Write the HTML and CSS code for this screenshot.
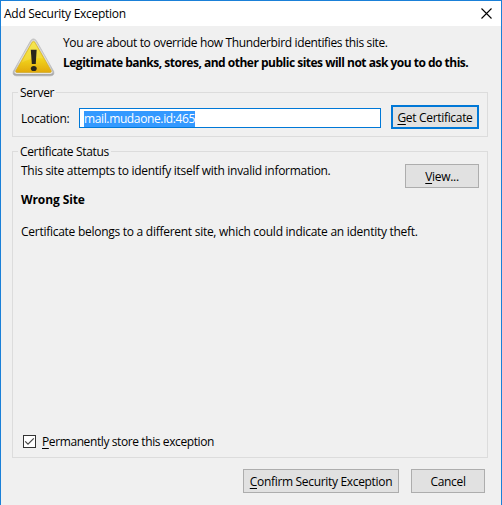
FILE: index.html
```html
<!DOCTYPE html>
<html lang="en">
<head>
    <meta charset="UTF-8">
    <title>Add Security Exception</title>
    <link rel="stylesheet" href="styles.css">
</head>
<body>
    <div class="dialog">
        <div class="titlebar">
            <span class="title">Add Security Exception</span>
            <svg class="close" width="11" height="11" viewBox="0 0 11 11">
                <path d="M0.5 0.5L10.5 10.5M10.5 0.5L0.5 10.5" stroke="#000" stroke-width="1.1"/>
            </svg>
        </div>

        <div class="warning">
            <svg class="warning-icon" width="43" height="39" viewBox="0 0 44 40">
                <defs>
                    <linearGradient id="edge" x1="0" y1="0" x2="0" y2="1">
                        <stop offset="0" stop-color="#c9c9c9"/>
                        <stop offset="0.6" stop-color="#dedede"/>
                        <stop offset="1" stop-color="#a4a4a4"/>
                    </linearGradient>
                    <linearGradient id="fill" x1="0" y1="0" x2="0" y2="1">
                        <stop offset="0" stop-color="#f3e33c"/>
                        <stop offset="0.55" stop-color="#f2d51c"/>
                        <stop offset="1" stop-color="#e2a90c"/>
                    </linearGradient>
                </defs>
                <path d="M19.2 2.6Q22 -0.6 24.8 2.6L42.6 34Q44 38.6 39.6 38.8H4.4Q0 38.6 1.4 34Z" fill="url(#edge)" stroke="#b4b4b4" stroke-width="0.7"/>
                <path d="M20 3.6Q22 1.2 24 3.6L41.4 34.4Q42 36.6 39.4 36.8H4.6Q2 36.6 2.6 34.4Z" fill="#e6e6e6"/>
                <path d="M20.6 4.2Q22 2.4 23.4 4.2L40.2 33.6Q40.6 35.3 39.2 35.4H4.8Q3.4 35.3 3.8 33.6Z" fill="url(#fill)" stroke="#cfa829" stroke-width="0.7"/>
                <path d="M20.8 5.4Q22 3.8 23.2 5.4L32 21Q20 20 9.6 25.4Z" fill="#fff" opacity="0.13"/>
                <path d="M19.2 12H25.2L24.3 26.6H20.3Z" fill="#29271c"/>
                <ellipse cx="22.3" cy="31.3" rx="3" ry="2.6" fill="#29271c"/>
            </svg>
            <div class="warning-text">
                <p class="override">You are about to override how Thunderbird identifies this site.</p>
                <p class="legit">Legitimate banks, stores, and other public sites will not ask you to do this.</p>
            </div>
        </div>

        <fieldset class="server">
            <legend>Server</legend>
            <label class="location-label" for="location">Location:</label>
            <div class="location" id="location"><span class="selected">mail.mudaone.id:465</span></div>
            <button class="btn get-cert"><u>G</u>et Certificate</button>
        </fieldset>

        <fieldset class="status">
            <legend class="status-legend">Certificate Status</legend>
            <div class="status-row">
                <p class="attempt">This site attempts to identify itself with invalid information.</p>
                <button class="btn view"><u>V</u>iew...</button>
            </div>
            <p class="wrong">Wrong Site</p>
            <p class="belongs">Certificate belongs to a different site, which could indicate an identity theft.</p>
            <div class="store">
                <svg class="checkbox" width="13" height="13" viewBox="0 0 13 13">
                    <rect x="0.5" y="0.5" width="12" height="12" fill="#fff" stroke="#333"/>
                    <path d="M2.2 6.4L5 9.2L10.8 3.4" fill="none" stroke="#444" stroke-width="1.2"/>
                </svg>
                <span class="store-label"><u>P</u>ermanently store this exception</span>
            </div>
        </fieldset>

        <div class="actions">
            <button class="btn confirm"><u>C</u>onfirm Security Exception</button>
            <button class="btn cancel">Cancel</button>
        </div>
    </div>
</body>
</html>
```
FILE: styles.css
```css
* {
    box-sizing: border-box;
}
body {
    margin: 0;
    font-family: "Open Sans", "Noto Sans", sans-serif;
    font-size: 12px;
    line-height: 17px;
    letter-spacing: -0.27px;
    color: #000;
    white-space: nowrap;
    overflow: hidden;
}
p {
    margin: 0;
}
u {
    text-underline-offset: 2px;
    text-decoration-thickness: 1px;
    text-decoration-skip-ink: none;
}
.dialog {
    height: 505px;
    background-color: #f0f0f0;
    border: 1px solid #1a80d8;
    border-bottom: none;
}
.titlebar {
    display: flex;
    align-items: center;
    justify-content: space-between;
    height: 25px;
    padding: 0 9px 0 3px;
    background-color: #fff;
}
.warning {
    display: flex;
    height: 58px;
    padding: 8px 0 0 10px;
}
.warning-icon {
    margin: 4px 0 0 1px;
}
.warning-text {
    margin-left: 8px;
}
.override {
    letter-spacing: -0.365px;
}
.legit {
    margin-top: 3px;
    font-weight: bold;
    letter-spacing: -0.5px;
}
fieldset {
    min-width: 0;
    margin: 0 13px 0 11px;
    padding: 0 8px 0 5px;
    border: 1px solid #dcdcdc;
}
legend {
    height: 17px;
    padding: 0 2px;
}
.status-legend {
    letter-spacing: -0.34px;
}
.server {
    height: 53px;
}
.server, .store {
    display: flex;
}
.location-label {
    width: 58px;
    margin: 9px 0 0 3px;
}
.location {
    width: 302px;
    height: 20px;
    margin-top: 7px;
    padding: 1px 4px;
    border: 1px solid #0078d7;
    background-color: #fff;
}
.selected {
    display: inline-block;
    height: 16px;
    line-height: 16px;
    letter-spacing: -0.37px;
    background-color: #3399ff;
    color: #fff;
}
.btn {
    height: 24px;
    padding: 0;
    border: 1px solid #adadad;
    background-color: #e1e1e1;
    color: #000;
    font: inherit;
    letter-spacing: -0.32px;
}
.get-cert {
    width: 88px;
    margin: 4px 0 0 10px;
    border: 2px solid #0078d7;
}
.status {
    height: 315px;
    margin-top: 6px;
}
.status-row {
    display: flex;
    justify-content: space-between;
    padding: 2px 0 0 3px;
}
.attempt {
    letter-spacing: -0.29px;
}
.view {
    width: 74px;
    margin-top: 2px;
}
.wrong {
    margin: 3px 0 0 3px;
    font-weight: bold;
    letter-spacing: -0.1px;
}
.belongs {
    margin: 15px 0 0 3px;
}
.store {
    align-items: center;
    margin: 193px 0 0 5px;
}
.store-label {
    margin-left: 6px;
    letter-spacing: -0.4px;
}
.actions {
    display: flex;
    justify-content: flex-end;
    gap: 12px;
    margin: 11px 16px 0 0;
}
.confirm {
    width: 156px;
}
.cancel {
    width: 74px;
}
```
